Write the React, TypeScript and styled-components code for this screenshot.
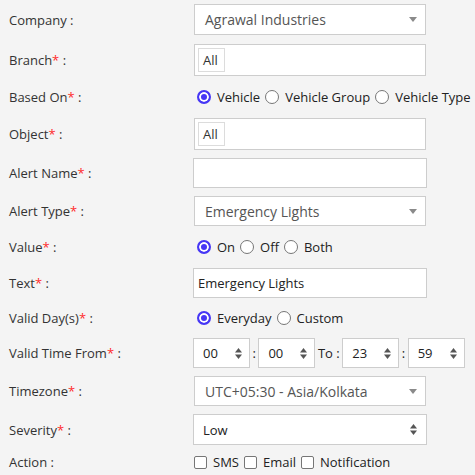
import styled, { createGlobalStyle } from 'styled-components';

const GlobalStyle = createGlobalStyle`
  html, body {
    margin: 0;
    padding: 0;
    background: #f4f4f4;
  }
  body {
    font-family: 'Open Sans', 'Noto Sans', sans-serif;
    font-size: 13px;
    color: #333;
  }
`;

function SelectArrow() {
  return (
    <svg width="8" height="5" viewBox="0 0 8 5">
      <polygon points="0,0 8,0 4,5" fill="#8a8a8a" />
    </svg>
  );
}

function Spinner() {
  return (
    <svg width="7" height="11" viewBox="0 0 7 11">
      <polygon points="0,4.5 3.5,0 7,4.5" fill="#555" />
      <polygon points="0,6.5 3.5,11 7,6.5" fill="#555" />
    </svg>
  );
}

function Label({ text, required }: { text: string; required?: boolean }) {
  return (
    <FieldLabel>
      {text}
      {required && <Star>*</Star>} :
    </FieldLabel>
  );
}

function Radio({ label, checked }: { label: string; checked?: boolean }) {
  return (
    <Option>
      <RadioDot $checked={checked} />
      {label}
    </Option>
  );
}

function Check({ label }: { label: string }) {
  return (
    <Option>
      <CheckBox />
      {label}
    </Option>
  );
}

function TimeBox({ value }: { value: string }) {
  return (
    <TimeField>
      {value}
      <Spinner />
    </TimeField>
  );
}

export default function App() {
  return (
    <>
      <GlobalStyle />
      <Form>
        <Row $h={31}>
          <Label text="Company" />
          <SelectBox>
            Agrawal Industries
            <SelectArrow />
          </SelectBox>
        </Row>
        <Row $h={32} $mt={1}>
          <Label text="Branch" required />
          <TagBox>
            <Tag>All</Tag>
          </TagBox>
        </Row>
        <Row $h={26}>
          <Label text="Based On" required />
          <OptionGroup>
            <Radio label="Vehicle" checked />
            <Radio label="Vehicle Group" />
            <Radio label="Vehicle Type" />
          </OptionGroup>
        </Row>
        <Row $h={32}>
          <Label text="Object" required />
          <TagBox>
            <Tag>All</Tag>
          </TagBox>
        </Row>
        <Row $h={30}>
          <Label text="Alert Name" required />
          <TextInput />
        </Row>
        <Row $h={30}>
          <Label text="Alert Type" required />
          <SelectBox>
            Emergency Lights
            <SelectArrow />
          </SelectBox>
        </Row>
        <Row $h={26}>
          <Label text="Value" required />
          <OptionGroup>
            <Radio label="On" checked />
            <Radio label="Off" />
            <Radio label="Both" />
          </OptionGroup>
        </Row>
        <Row $h={30}>
          <Label text="Text" required />
          <TextInput>Emergency Lights</TextInput>
        </Row>
        <Row $h={24}>
          <Label text="Valid Day(s)" required />
          <OptionGroup>
            <Radio label="Everyday" checked />
            <Radio label="Custom" />
          </OptionGroup>
        </Row>
        <Row $h={30}>
          <Label text="Valid Time From" required />
          <TimeRow>
            <TimeBox value="00" />
            <Sep>:</Sep>
            <TimeBox value="00" />
            <Sep>To :</Sep>
            <TimeBox value="23" />
            <Sep>:</Sep>
            <TimeBox value="59" />
          </TimeRow>
        </Row>
        <Row $h={30}>
          <Label text="Timezone" required />
          <SelectBox>
            UTC+05:30 - Asia/Kolkata
            <SelectArrow />
          </SelectBox>
        </Row>
        <Row $h={31}>
          <Label text="Severity" required />
          <NativeSelect>
            Low
            <Spinner />
          </NativeSelect>
        </Row>
        <Row $h={18}>
          <Label text="Action" />
          <OptionGroup $start={1}>
            <Check label="SMS" />
            <Check label="Email" />
            <Check label="Notification" />
          </OptionGroup>
        </Row>
      </Form>
    </>
  );
}

const Form = styled.div`
  display: flex;
  flex-direction: column;
  gap: 8px;
  padding: 4px 0 0 9px;
`;

const Row = styled.div<{ $h: number; $mt?: number }>`
  display: grid;
  grid-template-columns: 184px 1fr;
  align-items: center;
  height: ${(p) => p.$h}px;
  margin-top: ${(p) => p.$mt ?? 0}px;
`;

const FieldLabel = styled.span`
  color: #333;
  font-size: 13px;
  white-space: nowrap;
`;

const Star = styled.span`
  color: #ff2a2a;
`;

const SelectBox = styled.div`
  box-sizing: border-box;
  display: flex;
  align-items: center;
  justify-content: space-between;
  width: 232px;
  height: 100%;
  margin-left: 1px;
  padding: 0 8px 0 10px;
  background: #fff;
  border: 1px solid #cdcdcd;
  color: #555;
  font-size: 14px;
`;

const NativeSelect = styled.div`
  box-sizing: border-box;
  display: flex;
  align-items: center;
  justify-content: space-between;
  width: 234px;
  height: 100%;
  padding: 0 9px 0 9px;
  background: #fff;
  border: 1px solid #cdcdcd;
  color: #222;
  font-size: 13px;
`;

const TagBox = styled.div`
  box-sizing: border-box;
  display: flex;
  align-items: center;
  width: 232px;
  height: 100%;
  margin-left: 1px;
  padding: 0 3px;
  background: #fff;
  border: 1px solid #cdcdcd;
`;

const Tag = styled.span`
  box-sizing: border-box;
  display: flex;
  align-items: center;
  height: 24px;
  padding: 0 6px 0 4px;
  border: 1px solid #dcdcdc;
  color: #333;
  font-size: 13px;
`;

const TextInput = styled.div`
  box-sizing: border-box;
  display: flex;
  align-items: center;
  width: 234px;
  height: 100%;
  padding: 0 4px;
  background: #fff;
  border: 1px solid #cdcdcd;
  color: #222;
  font-size: 13px;
`;

const OptionGroup = styled.div<{ $start?: number }>`
  display: flex;
  align-items: center;
  gap: 5px;
  padding-left: ${(p) => p.$start ?? 4}px;
  white-space: nowrap;
`;

const Option = styled.label`
  display: flex;
  align-items: center;
  gap: 6px;
  color: #222;
  font-size: 13px;
`;

const RadioDot = styled.span<{ $checked?: boolean }>`
  box-sizing: border-box;
  width: 14px;
  height: 14px;
  border-radius: 50%;
  border: ${(p) => (p.$checked ? '2px solid #4636f5' : '1px solid #767676')};
  background: ${(p) => (p.$checked ? '#4636f5' : '#fff')};
  box-shadow: ${(p) => (p.$checked ? 'inset 0 0 0 2px #fff' : 'none')};
`;

const CheckBox = styled.span`
  box-sizing: border-box;
  width: 13px;
  height: 13px;
  border-radius: 2px;
  border: 1px solid #767676;
  background: #fff;
`;

const TimeRow = styled.div`
  display: flex;
  align-items: center;
  height: 100%;
`;

const TimeField = styled.div`
  box-sizing: border-box;
  display: flex;
  align-items: center;
  justify-content: space-between;
  width: 57px;
  height: 100%;
  padding: 0 7px 0 9px;
  background: #fff;
  border: 1px solid #cdcdcd;
  color: #222;
  font-size: 13px;
`;

const Sep = styled.span`
  padding: 0 2.5px;
  color: #222;
  font-size: 13px;
`;
